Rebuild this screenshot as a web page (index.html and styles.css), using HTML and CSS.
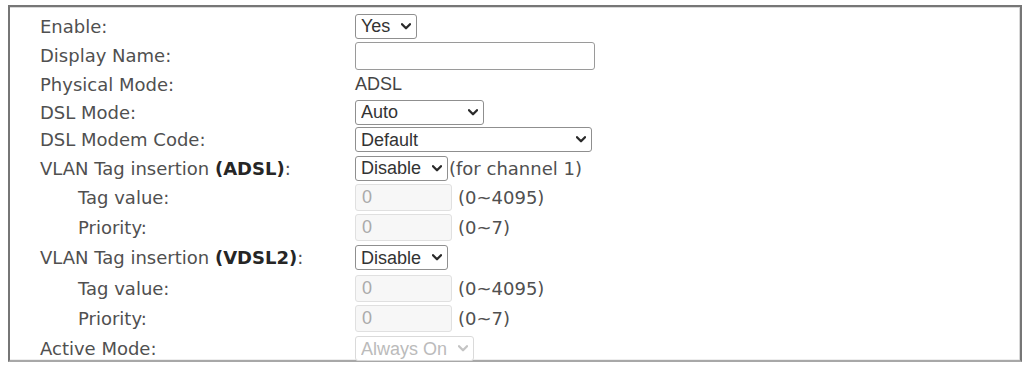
FILE: index.html
```html
<!DOCTYPE html>
<html lang="en">
<head>
  <meta charset="UTF-8">
  <title>WAN - DSL Settings</title>
  <link rel="stylesheet" href="styles.css">
</head>
<body>
  <div class="panel">
    <div class="form">
      <div class="label">Enable:</div>
      <div class="field">
        <span class="selwrap">
          <select class="sel sel-yes">
            <option>Yes</option>
            <option>No</option>
          </select>
          <svg class="chev" width="10" height="7" viewBox="0 0 10 7"><polyline points="1,1.2 5,5.2 9,1.2"/></svg>
        </span>
      </div>

      <div class="label">Display Name:</div>
      <div class="field"><input type="text" class="txt txt-name"></div>

      <div class="label">Physical Mode:</div>
      <div class="field"><span class="value">ADSL</span></div>

      <div class="label">DSL Mode:</div>
      <div class="field">
        <span class="selwrap">
          <select class="sel sel-auto">
            <option>Auto</option>
          </select>
          <svg class="chev" width="10" height="7" viewBox="0 0 10 7"><polyline points="1,1.2 5,5.2 9,1.2"/></svg>
        </span>
      </div>

      <div class="label">DSL Modem Code:</div>
      <div class="field">
        <span class="selwrap">
          <select class="sel sel-code">
            <option>Default</option>
          </select>
          <svg class="chev" width="10" height="7" viewBox="0 0 10 7"><polyline points="1,1.2 5,5.2 9,1.2"/></svg>
        </span>
      </div>

      <div class="label">VLAN Tag insertion <b>(ADSL)</b>:</div>
      <div class="field">
        <span class="selwrap">
          <select class="sel sel-disable">
            <option>Disable</option>
            <option>Enable</option>
          </select>
          <svg class="chev" width="10" height="7" viewBox="0 0 10 7"><polyline points="1,1.2 5,5.2 9,1.2"/></svg>
        </span>
        <span class="hint tight">(for channel 1)</span>
      </div>

      <div class="label sub">Tag value:</div>
      <div class="field"><input type="text" class="txt txt-num" value="0" disabled><span class="hint">(0~4095)</span></div>

      <div class="label sub">Priority:</div>
      <div class="field"><input type="text" class="txt txt-num" value="0" disabled><span class="hint">(0~7)</span></div>

      <div class="label">VLAN Tag insertion <b>(VDSL2)</b>:</div>
      <div class="field">
        <span class="selwrap">
          <select class="sel sel-disable">
            <option>Disable</option>
            <option>Enable</option>
          </select>
          <svg class="chev" width="10" height="7" viewBox="0 0 10 7"><polyline points="1,1.2 5,5.2 9,1.2"/></svg>
        </span>
      </div>

      <div class="label sub">Tag value:</div>
      <div class="field"><input type="text" class="txt txt-num" value="0" disabled><span class="hint">(0~4095)</span></div>

      <div class="label sub">Priority:</div>
      <div class="field"><input type="text" class="txt txt-num" value="0" disabled><span class="hint">(0~7)</span></div>

      <div class="label">Active Mode:</div>
      <div class="field">
        <span class="selwrap off">
          <select class="sel sel-active" disabled>
            <option>Always On</option>
          </select>
          <svg class="chev" width="10" height="7" viewBox="0 0 10 7"><polyline points="1,1.2 5,5.2 9,1.2"/></svg>
        </span>
      </div>
    </div>
  </div>
</body>
</html>
```

FILE: styles.css
```css
body {
  margin: 0;
  padding: 0;
  background-color: #fff;
  font-family: "DejaVu Sans", Verdana, sans-serif;
  font-size: 18px;
  color: #505050;
}

.panel {
  margin: 5px 1px 0 8px;
  height: 357px;
  border: 2px solid #767676;
  border-bottom-color: #a8a8a8;
  box-shadow: inset 0 1px 0 #d8d8d8, inset -1px 0 0 #d8d8d8, inset 0 -1px 0 #eee;
  box-sizing: border-box;
  padding-top: 4px;
}

.form {
  display: grid;
  grid-template-columns: 345px 1fr;
  grid-template-rows: 30px 29.5px 28px 27px 28px 29px 29.5px 30.5px 30.5px 30px 30.5px 30.5px;
  align-items: center;
}

.label {
  padding-left: 30px;
  white-space: nowrap;
}

.label b {
  color: #262626;
}

.label.sub {
  padding-left: 68px;
}

.field {
  display: flex;
  align-items: center;
}

.value {
  font-family: "Liberation Sans", Arial, sans-serif;
  color: #444;
}

.hint {
  margin-left: 6px;
}

.hint.tight {
  margin-left: 1px;
}

/* select with a drawn chevron */
.selwrap {
  position: relative;
  display: inline-flex;
}

.sel {
  -webkit-appearance: none;
  appearance: none;
  font-family: "Liberation Sans", Arial, sans-serif;
  font-size: 18px;
  color: #333;
  height: 25px;
  margin: 0;
  padding: 0 0 0 5px;
  background-color: #fff;
  border: 1px solid #8f8f8f;
  border-radius: 3px;
  outline: none;
}

.chev {
  position: absolute;
  right: 6px;
  top: 9px;
  fill: none;
  stroke: #2a2a2a;
  stroke-width: 2.3;
  stroke-linecap: round;
  stroke-linejoin: round;
  pointer-events: none;
}

.sel-yes { width: 62px; }
.sel-auto { width: 129px; }
.sel-code { width: 237px; }
.sel-disable { width: 93px; }

.sel-active {
  width: 119px;
  color: #bbb;
  border-color: #dadada;
  opacity: 1;
}

.off .chev {
  stroke: #c4c4c4;
}

.txt {
  font-family: "Liberation Sans", Arial, sans-serif;
  font-size: 18px;
  box-sizing: border-box;
  margin: 0;
  border: 1px solid #9a9a9a;
  border-radius: 3px;
  padding: 0 6px;
  outline: none;
}

.txt-name {
  width: 240px;
  height: 28px;
}

.txt-num {
  width: 97px;
  height: 27px;
  color: #aaa;
  background-color: #f7f7f7;
  border-color: #e0e0e0;
}
```
